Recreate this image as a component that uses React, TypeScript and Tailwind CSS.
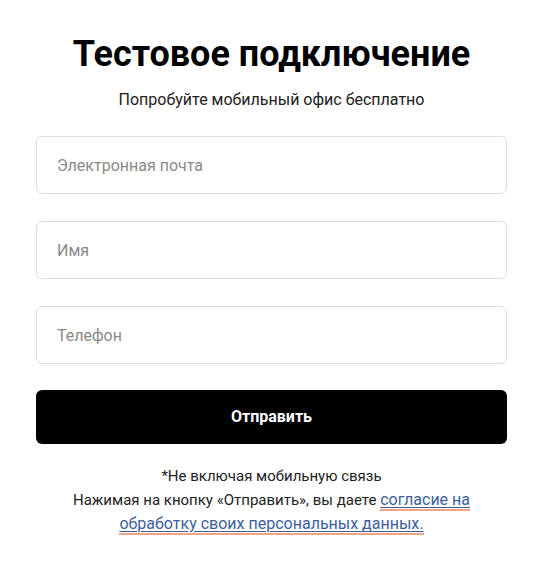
export default function App() {
  return (
    <div className="min-h-screen bg-white font-['Roboto',sans-serif] text-black">
      <div className="px-9 pt-[33px]">
        <h1 className="text-center text-[36px] font-bold leading-[42px]">Тестовое подключение</h1>
        <p className="mt-[15px] text-center text-[16px] leading-[20px] text-[#222]">
          Попробуйте мобильный офис бесплатно
        </p>

        <form className="mt-[26px] flex flex-col gap-[27px]" onSubmit={(e) => e.preventDefault()}>
          <input
            type="email"
            placeholder="Электронная почта"
            className="h-[58px] w-full rounded-md border border-[#dedede] px-5 text-[16px] outline-none placeholder:text-[#8a8a8a]"
          />
          <input
            type="text"
            placeholder="Имя"
            className="h-[58px] w-full rounded-md border border-[#dedede] px-5 text-[16px] outline-none placeholder:text-[#8a8a8a]"
          />
          <input
            type="tel"
            placeholder="Телефон"
            className="h-[58px] w-full rounded-md border border-[#dedede] px-5 text-[16px] outline-none placeholder:text-[#8a8a8a]"
          />
          <button
            type="submit"
            className="-mt-[1px] h-[54px] w-full rounded-md bg-black text-[16px] font-bold text-white"
          >
            Отправить
          </button>
        </form>

        <div className="mt-[20px] text-center text-[15px] leading-[24px] text-[#222]">
          <p>*Не включая мобильную связь</p>
          <p className="px-[20px]">
            Нажимая на кнопку «Отправить», вы даете{" "}
            <a href="#" className="border-b-2 border-[#f0a486] text-[16px] leading-[20px] text-[#3b5fa0] underline decoration-[#3b5fa0] underline-offset-2">
              согласие на обработку своих персональных данных.
            </a>
          </p>
        </div>
      </div>
    </div>
  );
}
